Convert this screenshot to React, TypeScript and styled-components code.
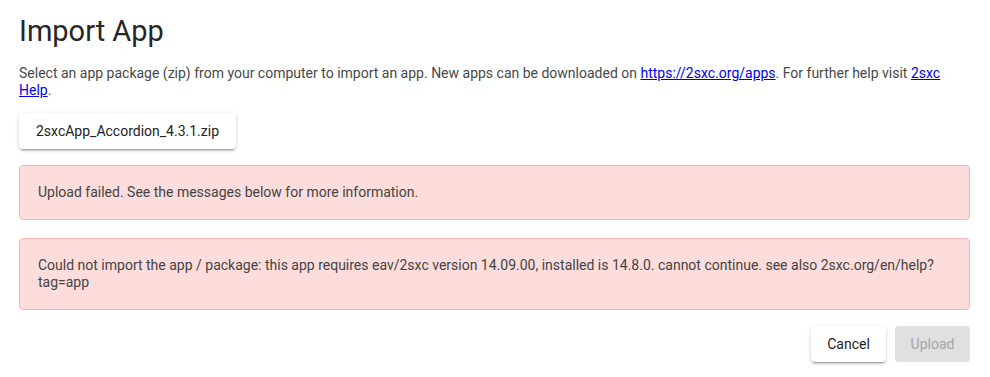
import styled, { createGlobalStyle } from "styled-components";

const GlobalStyle = createGlobalStyle`
  body {
    margin: 0;
    background: #ffffff;
    font-family: Roboto, "Helvetica Neue", Arial, sans-serif;
  }
`;

const Dialog = styled.div`
  padding: 11px 20px 16px 19px;
  display: flex;
  flex-direction: column;
`;

const Title = styled.h2`
  margin: 0;
  font-size: 29px;
  font-weight: 400;
  line-height: 40px;
  color: #262626;
`;

const Intro = styled.p`
  margin: 14px 0 0;
  font-size: 14px;
  line-height: 17px;
  color: #484848;

  a {
    color: #0000ee;
  }
`;

const Button = styled.button<{ disabled?: boolean }>`
  font-family: inherit;
  font-size: 14px;
  font-weight: 400;
  height: 36px;
  padding: 0 16px;
  border: none;
  border-radius: 4px;
  cursor: pointer;
  background: ${(p) => (p.disabled ? "#e0e0e0" : "#ffffff")};
  color: ${(p) => (p.disabled ? "#a6a6a6" : "#222")};
  box-shadow: ${(p) =>
    p.disabled
      ? "none"
      : "0 3px 1px -2px rgba(0,0,0,0.2), 0 2px 2px 0 rgba(0,0,0,0.14), 0 1px 5px 0 rgba(0,0,0,0.12)"};
`;

const FileButton = styled(Button)`
  align-self: flex-start;
  margin-top: 14px;
  width: 217px;
`;

const Alert = styled.div<{ gap: number }>`
  margin-top: ${(p) => p.gap}px;
  padding: 18px;
  background: #fddcdc;
  border: 1px solid #f7b6b6;
  border-radius: 4px;
  font-size: 14px;
  line-height: 17px;
  color: #444;
`;

const Actions = styled.div`
  display: flex;
  justify-content: flex-end;
  gap: 9px;
  margin-top: 16px;
`;

const ActionButton = styled(Button)`
  width: 75px;
  padding: 0;
`;

export default function App() {
  return (
    <>
      <GlobalStyle />
      <Dialog>
        <Title>Import App</Title>
        <Intro>
          Select an app package (zip) from your computer to import an app. New apps can be
          downloaded on <a href="#">https://2sxc.org/apps</a>. For further help visit{" "}
          <a href="#">2sxc Help</a>.
        </Intro>
        <FileButton>2sxcApp_Accordion_4.3.1.zip</FileButton>
        <Alert gap={16}>Upload failed. See the messages below for more information.</Alert>
        <Alert gap={18}>
          Could not import the app / package: this app requires eav/2sxc version 14.09.00,
          installed is 14.8.0. cannot continue. see also 2sxc.org/en/help?tag=app
        </Alert>
        <Actions>
          <ActionButton>Cancel</ActionButton>
          <ActionButton disabled>Upload</ActionButton>
        </Actions>
      </Dialog>
    </>
  );
}
